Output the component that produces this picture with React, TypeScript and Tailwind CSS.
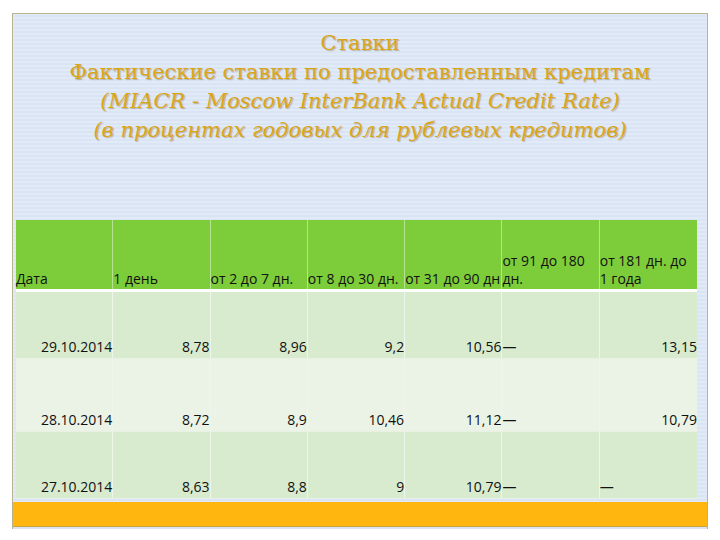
import React from 'react'

const cols = ['Дата', '1 день', 'от 2 до 7 дн.', 'от 8 до 30 дн.', 'от 31 до 90 дн', 'от 91 до 180 дн.', 'от 181 дн. до 1 года']

type Row = { date: string; vals: string[]; dash6: boolean; last: string; lastDash?: boolean; bg: string }

const rows: Row[] = [
  { date: '29.10.2014', vals: ['8,78', '8,96', '9,2', '10,56'], dash6: true, last: '13,15', bg: 'bg-[#d8ebcf]' },
  { date: '28.10.2014', vals: ['8,72', '8,9', '10,46', '11,12'], dash6: true, last: '10,79', bg: 'bg-[#ebf3e6]' },
  { date: '27.10.2014', vals: ['8,63', '8,8', '9', '10,79'], dash6: true, last: '—', lastDash: true, bg: 'bg-[#d8ebcf]' },
]

export default function App() {
  return (
    <div className="w-[720px] h-[540px] bg-white pt-[13px] pl-[12px]">
      <div className="w-[696px] h-[516px] border-l border-t border-r border-[#b9b48e] flex flex-col bg-[repeating-linear-gradient(0deg,#d9e4f4_0px,#d9e4f4_2px,#e2eaf7_2px,#e2eaf7_4px)]">
        <div className="h-[206px] pt-[15px] text-center text-[#dca516] text-[21px] leading-[29px] font-normal [text-shadow:1px_1px_1px_rgba(130,110,70,0.45)] font-['DejaVu_Serif','Liberation_Serif',serif]">
          <div>Ставки</div>
          <div>Фактические ставки по предоставленным кредитам</div>
          <div className="italic">(MIACR - Moscow InterBank Actual Credit Rate)</div>
          <div className="italic">(в процентах годовых для рублевых кредитов)</div>
        </div>
        <div className="ml-[3px] w-[681px] font-['Open_Sans',sans-serif] text-[14px] text-[#111]">
          <div className="grid grid-cols-7 h-[69px] bg-[#7dcd3b]">
            {cols.map((c, i) => (
              <div key={i} className="border-r border-[#b5e38f] last:border-r-0 flex items-end pb-[1px] leading-[18px] whitespace-nowrap">
                {i === 5 ? (
                  <span>от 91 до 180<br />дн.</span>
                ) : i === 6 ? (
                  <span>от 181 дн. до<br />1 года</span>
                ) : (
                  <span>{c}</span>
                )}
              </div>
            ))}
          </div>
          <div className="h-[3px] bg-white" />
          {rows.map((r, ri) => (
            <div key={ri} className={`grid grid-cols-7 ${ri === 1 ? 'h-[73px]' : 'h-[67px]'} ${r.bg} border-b border-[#e9f1e3]`}>
              <div className="border-r border-[#eef5ea] flex items-end justify-end pb-[1px]">{r.date}</div>
              {r.vals.map((v, vi) => (
                <div key={vi} className="border-r border-[#eef5ea] flex items-end justify-end pb-[1px]">{v}</div>
              ))}
              <div className="border-r border-[#eef5ea] flex items-end pb-[1px]">{r.dash6 ? '—' : ''}</div>
              <div className={`flex items-end pb-[1px] ${r.lastDash ? 'justify-start' : 'justify-end'}`}>{r.last}</div>
            </div>
          ))}
        </div>
        <div className="h-[3px]" />
        <div className="h-[25px] bg-[#ffb70f] border-b border-[#c9a23a]" />
      </div>
    </div>
  )
}
